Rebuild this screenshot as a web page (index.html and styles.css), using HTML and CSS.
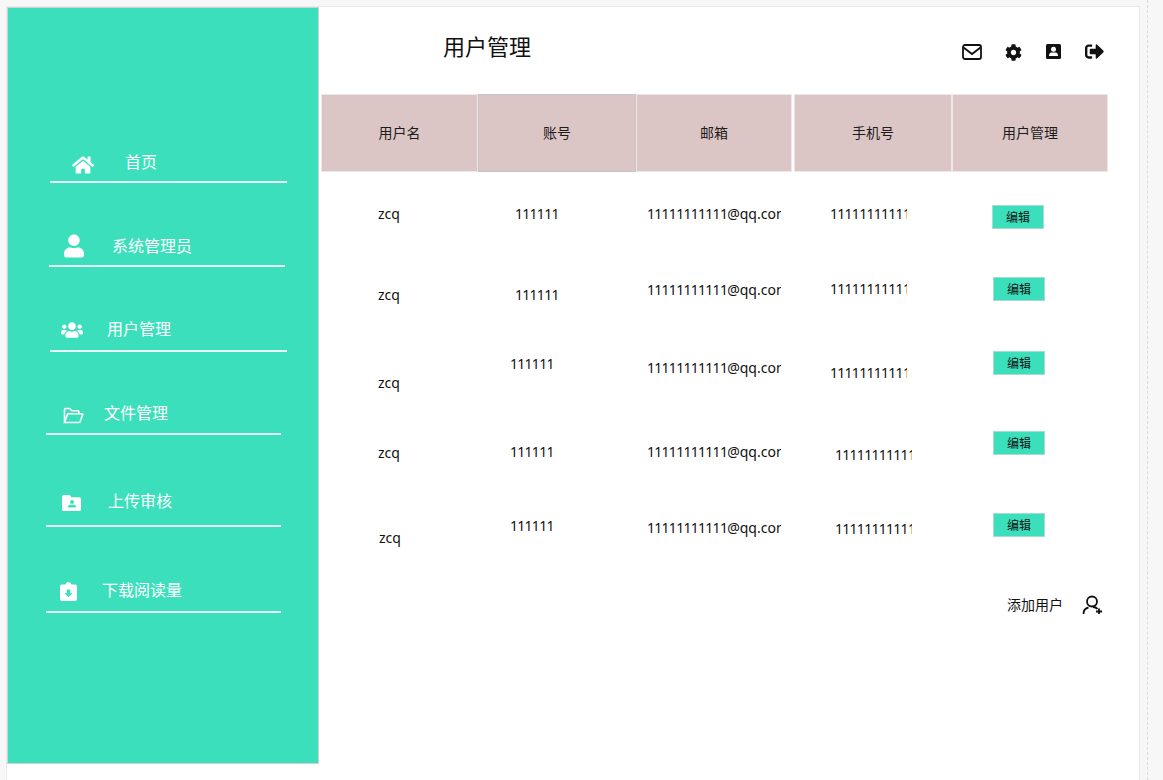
FILE: index.html
```html
<!DOCTYPE html>
<html lang="zh-CN">
<head>
<meta charset="utf-8">
<title>用户管理</title>
<link rel="stylesheet" href="styles.css">
</head>
<body>
<div class="frame">
  <aside class="sidebar">
    <nav class="nav">
      <a class="item n1"><svg class="ic w22" viewBox="0 0 576 512"><path d="M280.37 148.26L96 300.11V464a16 16 0 0 0 16 16l112.06-.29a16 16 0 0 0 15.92-16V368a16 16 0 0 1 16-16h64a16 16 0 0 1 16 16v95.64a16 16 0 0 0 16 16.05L464 480a16 16 0 0 0 16-16V300L295.67 148.26a12.19 12.19 0 0 0-15.3 0zM571.6 251.47L488 182.56V44.05a12 12 0 0 0-12-12h-56a12 12 0 0 0-12 12v72.61L318.47 43a48 48 0 0 0-61 0L4.34 251.47a12 12 0 0 0-1.6 16.9l25.5 31A12 12 0 0 0 45.15 301l235.22-193.74a12.19 12.19 0 0 1 15.3 0L530.9 301a12 12 0 0 0 16.9-1.6l25.5-31a12 12 0 0 0-1.7-16.93z"/></svg><span>首页</span></a>
      <a class="item n2"><svg class="ic w20" viewBox="0 0 448 512"><path d="M224 256c70.7 0 128-57.3 128-128S294.7 0 224 0 96 57.3 96 128s57.3 128 128 128zm89.6 32h-16.7c-22.2 10.2-46.9 16-72.9 16s-50.6-5.8-72.9-16h-16.7C60.2 288 0 348.2 0 422.4V464c0 26.5 21.5 48 48 48h352c26.5 0 48-21.5 48-48v-41.6c0-74.2-60.2-134.4-134.4-134.4z"/></svg><span>系统管理员</span></a>
      <a class="item n3"><svg class="ic w22" viewBox="0 0 640 512"><path d="M96 224c35.3 0 64-28.7 64-64s-28.7-64-64-64-64 28.7-64 64 28.7 64 64 64zm448 0c35.3 0 64-28.7 64-64s-28.7-64-64-64-64 28.7-64 64 28.7 64 64 64zm32 32h-64c-17.6 0-33.5 7.1-45.1 18.6 40.3 22.1 68.9 62 75.1 109.4h66c17.7 0 32-14.3 32-32v-32c0-35.3-28.7-64-64-64zm-256 0c61.9 0 112-50.1 112-112S381.9 32 320 32 208 82.1 208 144s50.1 112 112 112zm76.8 32h-8.3c-20.8 10-43.9 16-68.5 16s-47.6-6-68.5-16h-8.3C179.6 288 128 339.6 128 403.2V432c0 26.5 21.5 48 48 48h288c26.5 0 48-21.5 48-48v-28.8c0-63.6-51.6-115.2-115.2-115.2zm-223.7-13.4C161.5 263.1 145.6 256 128 256H64c-35.3 0-64 28.7-64 64v32c0 17.7 14.3 32 32 32h65.9c6.3-47.4 34.9-87.3 75.2-109.4z"/></svg><span>用户管理</span></a>
      <a class="item n4"><svg class="ic w21" viewBox="0 0 21 17"><path class="line" d="M1.5 15.5V2.2q0-.7.7-.7h4.6l2 2.2h6.3q.7 0 .7.7v2.4M1.5 15.5l3-8.2q.2-.5.7-.5h14q.8 0 .5.7l-2.6 7.2q-.2.8-1 .8z"/></svg><span>文件管理</span></a>
      <a class="item n5"><svg class="ic w19" viewBox="0 0 19 16"><path d="M1.5 0h6l2 2.2h8q1.5 0 1.5 1.5v10.8q0 1.5-1.5 1.5h-16Q0 16 0 14.500V1.500Q0 0 1.500 0z"/><circle class="cut" cx="10" cy="7" r="2"/><path class="cut" d="M6 12.500q0-2.800 2.300-2.800h3.400q2.300 0 2.300 2.800z"/></svg><span>上传审核</span></a>
      <a class="item n6"><svg class="ic w17" viewBox="0 0 17 19"><path d="M2 2.500h3.500Q6 0 8.500 0T11.500 2.500H15q2 0 2 2V17q0 2-2 2H2q-2 0-2-2V4.500q0-2 2-2z"/><path class="cut" d="M6.800 7.500h3.400v3.500h2.300l-4 4.300-4-4.300h2.300z"/></svg><span>下载阅读量</span></a>
    </nav>
  </aside>
  <main class="main">
    <header class="top">
      <h1 class="title">用户管理</h1>
      <div class="tools">
        <svg class="tool t1" viewBox="0 0 20 16"><rect class="dark-line" x="1" y="1" width="18" height="14" rx="2"/><path class="dark-line" d="M1.500 3.500 10 10l8.500-6.500"/></svg>
        <svg class="tool t2" viewBox="0 0 512 512"><path d="M487.4 315.7l-42.6-24.600c4.300-23.200 4.300-47 0-70.200l42.600-24.600c4.900-2.800 7.100-8.600 5.500-14-11.100-35.600-30-67.800-54.700-94.600-3.800-4.100-10-5.100-14.800-2.300L380.800 110c-17.900-15.400-38.500-27.300-60.800-35.100V25.800c0-5.600-3.900-10.500-9.400-11.700-36.700-8.200-74.300-7.800-109.200 0-5.500 1.200-9.400 6.100-9.400 11.700V75c-22.200 7.900-42.800 19.800-60.800 35.100L88.700 85.500c-4.900-2.800-11-1.900-14.800 2.300-24.700 26.700-43.600 58.900-54.700 94.600-1.700 5.400.6 11.200 5.500 14L67.300 221c-4.300 23.200-4.300 47 0 70.200l-42.600 24.600c-4.900 2.800-7.100 8.600-5.500 14 11.100 35.600 30 67.800 54.700 94.600 3.800 4.100 10 5.100 14.800 2.300l42.600-24.600c17.900 15.400 38.500 27.300 60.800 35.100v49.200c0 5.600 3.900 10.500 9.400 11.700 36.700 8.200 74.300 7.800 109.200 0 5.500-1.200 9.400-6.100 9.400-11.700v-49.200c22.200-7.900 42.800-19.800 60.800-35.100l42.600 24.600c4.900 2.800 11 1.900 14.800-2.300 24.700-26.700 43.600-58.900 54.700-94.600 1.500-5.500-.7-11.300-5.600-14.100zM256 336c-44.100 0-80-35.900-80-80s35.900-80 80-80 80 35.900 80 80-35.900 80-80 80z"/></svg>
        <svg class="tool t3" viewBox="0 0 15 15"><rect width="15" height="15" rx="1.500"/><circle class="hole" cx="7.500" cy="5.300" r="2.500"/><path class="hole" d="M3 12q0-3.500 2.500-3.500h4Q12 8.500 12 12z"/></svg>
        <svg class="tool t4" viewBox="0 60 512 392"><path d="M497 273L329 441c-15 15-41 4.500-41-17v-96H152c-13.300 0-24-10.700-24-24v-96c0-13.300 10.700-24 24-24h136V88c0-21.400 25.900-32 41-17l168 168c9.300 9.400 9.300 24.600 0 34zM192 436v-40c0-6.600-5.400-12-12-12H96c-17.700 0-32-14.300-32-32V160c0-17.700 14.300-32 32-32h84c6.600 0 12-5.400 12-12V76c0-6.600-5.400-12-12-12H96c-53 0-96 43-96 96v192c0 53 43 96 96 96h84c6.600 0 12-5.400 12-12z"/></svg>
      </div>
    </header>
    <section class="table">
      <div class="th c1">用户名</div><div class="th c2 picked">账号</div><div class="th c3">邮箱</div><div class="th c4">手机号</div><div class="th c5">用户管理</div>
      <div class="rows">
        <div class="cell name"><span class="txt mt29">zcq</span></div>
        <div class="cell acct a37"><span class="txt num mt29">111111</span></div>
        <div class="cell mail"><span class="txt clip-m mt29"><span class="num">11111111111</span>@qq.com</span></div>
        <div class="cell tel a36"><span class="txt num clip-t mt29">11111111111</span></div>
        <div class="cell act a40"><button class="edit mt30">编辑</button></div>

        <div class="cell name"><span class="txt mt30">zcq</span></div>
        <div class="cell acct a37"><span class="txt num mt30">111111</span></div>
        <div class="cell mail"><span class="txt clip-m mt25"><span class="num">11111111111</span>@qq.com</span></div>
        <div class="cell tel a36"><span class="txt num clip-t mt24">11111111111</span></div>
        <div class="cell act a41"><button class="edit mt22">编辑</button></div>

        <div class="cell name"><span class="txt mt38">zcq</span></div>
        <div class="cell acct a32"><span class="txt num mt19">111111</span></div>
        <div class="cell mail"><span class="txt clip-m mt23"><span class="num">11111111111</span>@qq.com</span></div>
        <div class="cell tel a36"><span class="txt num clip-t mt28">11111111111</span></div>
        <div class="cell act a41"><button class="edit mt16">编辑</button></div>

        <div class="cell name"><span class="txt mt28">zcq</span></div>
        <div class="cell acct a32"><span class="txt num mt27">111111</span></div>
        <div class="cell mail"><span class="txt clip-m mt27"><span class="num">11111111111</span>@qq.com</span></div>
        <div class="cell tel a41"><span class="txt num clip-t mt30">11111111111</span></div>
        <div class="cell act a41"><button class="edit mt16">编辑</button></div>

        <div class="cell name a58"><span class="txt mt33">zcq</span></div>
        <div class="cell acct a32"><span class="txt num mt21">111111</span></div>
        <div class="cell mail"><span class="txt clip-m mt23"><span class="num">11111111111</span>@qq.com</span></div>
        <div class="cell tel a41"><span class="txt num clip-t mt24">11111111111</span></div>
        <div class="cell act a41"><button class="edit mt18">编辑</button></div>
      </div>
    </section>
    <div class="add">
      <span>添加用户</span>
      <svg class="add-ic" viewBox="0 0 20 20"><circle class="dark-line" cx="10" cy="7.500" r="5"/><path class="dark-line" d="M1.500 20q0-5.500 5-6.500M11 13q3 0 4.500 2"/><path class="dark-line" d="M14 17.500h6M17 14.500v5.500"/></svg>
    </div>
  </main>
</div>
<div class="gutter"></div>
</body>
</html>
```
FILE: styles.css
```css
* { box-sizing: border-box; }
body {
  margin: 0;
  height: 780px;
  overflow: hidden;
  display: flex;
  background: #f7f7f7;
  font-family: "Noto Sans", "Noto Sans CJK SC", "Liberation Sans", sans-serif;
  color: #111;
}
.frame {
  margin: 6px 0 0 6px;
  width: 1134px;
  display: flex;
  align-items: flex-start;
  background: #fff;
  border: 1px solid #e9e9e9;
  border-bottom: 0;
}
.gutter {
  width: 1px;
  margin-left: 7px;
  border-left: 1px dashed #dcdcdc;
}
.sidebar {
  width: 312px;
  height: 757px;
  flex: none;
  background: #3bdfbb;
  border: 1px solid #c9d6d2;
  padding-top: 132px;
}
.nav { display: flex; flex-direction: column; }
.item {
  display: flex;
  align-items: flex-end;
  border-bottom: 2px solid #e9fbf6;
  color: #fff;
  font-size: 16px;
  line-height: 20px;
}
.ic { display: block; fill: #fff; flex: none; }
.line { fill: none; stroke: #fff; stroke-width: 1.600; }
.cut { fill: #3bdfbb; }
.w22 { width: 22px; height: 20px; }
.w20 { width: 20px; height: 24px; }
.w21 { width: 21px; height: 17px; }
.w19 { width: 19px; height: 16px; }
.w17 { width: 17px; height: 19px; }
.n1 { margin-left: 42px; width: 237px; height: 43px; padding: 0 0 9px 22px; gap: 31px; }
.n2 { margin-left: 41px; width: 236px; height: 84px; padding: 0 0 9px 15px; gap: 28px; }
.n3 { margin-left: 42px; width: 237px; height: 85px; padding: 0 0 11px 11px; gap: 24px; }
.n4 { margin-left: 38px; width: 235px; height: 83px; padding: 0 0 10px 17px; gap: 20px; }
.n5 { margin-left: 38px; width: 235px; height: 92px; padding: 0 0 14px 16px; gap: 27px; }
.n6 { margin-left: 38px; width: 235px; height: 86px; padding: 0 0 11px 14px; gap: 25px; }
.n1 .ic { margin-bottom: -3px; }
.n2 .ic { margin-bottom: -2px; }
.n3 .ic, .n4 .ic, .n6 .ic { margin-bottom: -1px; }
.main { flex: 1; min-width: 0; }
.top { height: 87px; display: flex; justify-content: space-between; }
.title {
  margin: 24px 0 0 124px;
  font-size: 22px;
  line-height: 30px;
  font-weight: 400;
  color: #111;
}
.tools {
  display: flex;
  align-items: flex-start;
  padding: 37px 35px 0 0;
}
.tool { display: block; fill: #111; flex: none; }
.dark-line { fill: none; stroke: #111; stroke-width: 1.800; }
.hole { fill: #fff; }
.t1 { width: 20px; height: 16px; }
.t2 { width: 17px; height: 17px; margin-left: 23px; }
.t3 { width: 15px; height: 15px; margin-left: 24px; }
.t4 { width: 19px; height: 15px; margin-left: 24px; }
.table {
  display: grid;
  grid-template-columns: 157px 158px 158px 158px 156px;
  margin-left: 2px;
}
.th {
  height: 78px;
  padding-bottom: 2px;
  display: flex;
  align-items: center;
  justify-content: center;
  background: #dcc5c5;
  border: 1px solid #efe7e7;
  font-size: 14px;
  color: #1c1c1c;
}
.c3 { margin-right: 2px; }
.picked { border-color: #c5c5c5; }
.rows {
  grid-column: 1 / -1;
  display: grid;
  grid-template-columns: subgrid;
  grid-auto-rows: 80px;
  margin-top: 3px;
}
.cell { min-width: 0; font-size: 14px; }
.name { padding-left: 57px; }
.a58 { padding-left: 58px; }
.mail { padding-left: 11px; }
.a32 { padding-left: 32px; }
.a37 { padding-left: 37px; }
.a36 { padding-left: 36px; }
.a41 { padding-left: 41px; }
.a40 { padding-left: 40px; }
.txt {
  display: block;
  line-height: 20px;
  white-space: nowrap;
  overflow: hidden;
}
.num { letter-spacing: -0.72px; }
.clip-m { width: 134px; }
.clip-t { width: 77px; }
.edit {
  display: block;
  width: 52px;
  height: 24px;
  padding: 0;
  background: #3bdfbb;
  border: 1px solid #a9dccf;
  font: 12px/22px "Noto Sans CJK SC", sans-serif;
  color: #111;
}
.mt16 { margin-top: 16px; }
.mt18 { margin-top: 18px; }
.mt19 { margin-top: 19px; }
.mt21 { margin-top: 21px; }
.mt22 { margin-top: 22px; }
.mt23 { margin-top: 23px; }
.mt24 { margin-top: 24px; }
.mt25 { margin-top: 25px; }
.mt27 { margin-top: 27px; }
.mt28 { margin-top: 28px; }
.mt29 { margin-top: 29px; }
.mt30 { margin-top: 30px; }
.mt33 { margin-top: 33px; }
.mt38 { margin-top: 38px; }
.add {
  display: flex;
  justify-content: flex-end;
  align-items: center;
  gap: 19px;
  margin-top: 19px;
  padding-right: 37px;
  font-size: 14px;
  color: #111;
}
.add-ic { width: 20px; height: 20px; display: block; }
```
